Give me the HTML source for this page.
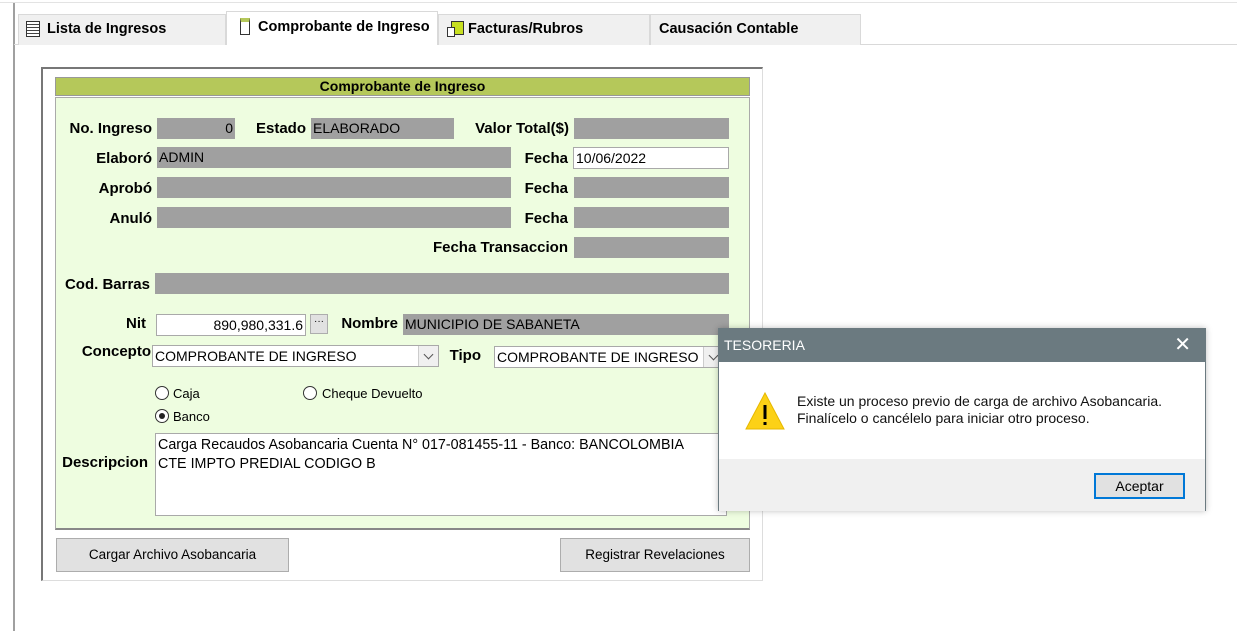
<!DOCTYPE html>
<html><head><meta charset="utf-8"><style>
*{margin:0;padding:0;box-sizing:border-box}
body{width:1237px;height:631px;background:#fff;position:relative;overflow:hidden;font-family:"Liberation Sans",sans-serif;font-size:13px;color:#000}
.a{position:absolute}
.lb{position:absolute;font-weight:bold;font-size:15px;white-space:nowrap}
.lr{position:absolute;font-weight:bold;font-size:15px;white-space:nowrap;text-align:right}
.r{text-align:right}
.g{position:absolute;background:#a0a0a0;height:21px;font-size:14px;line-height:21px;padding:0 2px;white-space:nowrap;overflow:hidden}
.w{position:absolute;background:#fff;border:1px solid #a9a9a9;height:22px;font-size:14px;line-height:20px;padding:0 2px;white-space:nowrap}
.tab{position:absolute;top:14px;height:31px;background:#f0f0f0;border:1px solid #d9d9d9;border-bottom:none;font-weight:bold;font-size:14.5px;line-height:28px;padding-left:8px}
.btn{position:absolute;background:#e1e1e1;border:1px solid #adadad;text-align:center;font-size:13.5px}
.rad{position:absolute;width:14px;height:14px;border:1px solid #333;border-radius:50%;background:#fff}
.dd{position:absolute;width:20px;height:20px;right:0;top:0;border-left:1px solid #ccc;background:#f0f0f0}
.dd:after{content:"";position:absolute;left:6px;top:5px;width:6px;height:6px;border-right:1px solid #555;border-bottom:1px solid #555;transform:rotate(45deg)}
</style></head><body>
<div class="a" style="left:0;top:0;width:1237px;height:3px;border-bottom:1px solid #e3e3e3"></div>
<div class="a" style="left:13px;top:3px;width:2px;height:628px;background:#a0a0a0"></div>
<div class="a" style="left:14px;top:44px;width:1223px;height:1px;background:#d9d9d9"></div>
<div class="tab" style="left:18px;width:208px;padding-left:28px">Lista de Ingresos</div>
<div class="a" style="left:26px;top:21px;width:14px;height:16px;border:1px solid #333;background:repeating-linear-gradient(#fff 0 2px,#444 2px 3px)"></div>
<div class="tab" style="left:226px;top:11px;width:212px;height:34px;background:#fff;padding-left:31px;line-height:30px">Comprobante de Ingreso</div>
<div class="a" style="left:240px;top:18px;width:10px;height:17px;border:1px solid #333;border-top:4px solid #b5c85a"></div>
<div class="tab" style="left:438px;width:212px;padding-left:29px">Facturas/Rubros</div>
<div class="a" style="left:451px;top:21px;width:13px;height:14px;background:#c8e020;border:1px solid #333"></div>
<div class="a" style="left:447px;top:27px;width:8px;height:10px;border:1px solid #333;background:#fff"></div>
<div class="tab" style="left:650px;width:211px">Causación Contable</div>

<div class="a" style="left:41px;top:67px;width:722px;height:514px;border:1px solid #ddd;border-top:2px solid #777;border-left:2px solid #777"></div>
<div class="a" style="left:55px;top:77px;width:695px;height:19px;background:#b5c85a;border:1px solid #999;text-align:center;font-weight:bold;font-size:14px;line-height:17px">Comprobante de Ingreso</div>
<div class="a" style="left:55px;top:97px;width:695px;height:433px;background:#eefde0;border:1px solid #aaa;border-bottom:2px solid #888"></div>

<div class="lr" style="left:20px;width:132px;top:120px">No. Ingreso</div>
<div class="g r" style="left:157px;top:118px;width:78px">0</div>
<div class="lb" style="left:256px;top:120px">Estado</div>
<div class="g" style="left:311px;top:118px;width:143px">ELABORADO</div>
<div class="lr" style="left:440px;width:129px;top:120px">Valor Total($)</div>
<div class="g" style="left:574px;top:118px;width:155px"></div>

<div class="lr" style="left:40px;width:112px;top:150px">Elaboró</div>
<div class="g" style="left:157px;top:147px;width:354px">ADMIN</div>
<div class="lr" style="left:500px;width:68px;top:150px">Fecha</div>
<div class="w" style="left:573px;top:147px;width:156px">10/06/2022</div>

<div class="lr" style="left:40px;width:112px;top:180px">Aprobó</div>
<div class="g" style="left:157px;top:177px;width:354px"></div>
<div class="lr" style="left:500px;width:68px;top:180px">Fecha</div>
<div class="g" style="left:574px;top:177px;width:155px"></div>

<div class="lr" style="left:40px;width:112px;top:210px">Anuló</div>
<div class="g" style="left:157px;top:207px;width:354px"></div>
<div class="lr" style="left:500px;width:68px;top:210px">Fecha</div>
<div class="g" style="left:574px;top:207px;width:155px"></div>

<div class="lr" style="left:400px;width:168px;top:239px">Fecha Transaccion</div>
<div class="g" style="left:574px;top:237px;width:155px"></div>

<div class="lr" style="left:40px;width:110px;top:276px">Cod. Barras</div>
<div class="g" style="left:155px;top:273px;width:574px"></div>

<div class="lr" style="left:60px;width:86px;top:315px">Nit</div>
<div class="w r" style="left:156px;top:314px;width:150px">890,980,331.6</div>
<div class="a" style="left:310px;top:314px;width:18px;height:20px;background:#e1e1e1;border:1px solid #adadad;font-size:10px;text-align:center;line-height:14px">···</div>
<div class="lr" style="left:320px;width:78px;top:315px">Nombre</div>
<div class="g" style="left:403px;top:314px;width:326px">MUNICIPIO DE SABANETA</div>

<div class="lr" style="left:60px;width:91px;top:343px">Concepto</div>
<div class="w" style="left:152px;top:345px;width:287px">COMPROBANTE DE INGRESO<div class="dd"></div></div>
<div class="lr" style="left:430px;width:51px;top:347px">Tipo</div>
<div class="w" style="left:494px;top:346px;width:230px">COMPROBANTE DE INGRESO<div class="dd"></div></div>

<div class="rad" style="left:155px;top:386px"></div><div class="a" style="left:173px;top:386px;font-size:13px">Caja</div>
<div class="rad" style="left:303px;top:386px"></div><div class="a" style="left:322px;top:386px;font-size:13px">Cheque Devuelto</div>
<div class="rad" style="left:155px;top:409px"></div><div class="a" style="left:159px;top:413px;width:6px;height:6px;border-radius:50%;background:#222"></div><div class="a" style="left:173px;top:409px;font-size:13px">Banco</div>

<div class="lr" style="left:40px;width:108px;top:454px">Descripcion</div>
<div class="a" style="left:155px;top:433px;width:572px;height:83px;background:#fff;border:1px solid #a9a9a9;font-size:14.3px;line-height:19px;padding:2px 2px;white-space:nowrap">Carga Recaudos Asobancaria Cuenta N° 017-081455-11 - Banco: BANCOLOMBIA<br>CTE IMPTO PREDIAL CODIGO B</div>

<div class="btn" style="left:56px;top:538px;width:233px;height:34px;line-height:32px">Cargar Archivo Asobancaria</div>
<div class="btn" style="left:560px;top:538px;width:190px;height:34px;line-height:32px">Registrar Revelaciones</div>

<div class="a" style="left:718px;top:328px;width:488px;height:183px;border:1px solid #6b7a80;background:#fff;box-shadow:0 0 6px rgba(0,0,0,.25)">
<div class="a" style="left:0;top:0;width:486px;height:33px;background:#6b7a80;color:#fff;font-size:14px;line-height:33px;padding-left:5px">TESORERIA<span style="position:absolute;right:14px;top:0;font-size:20px">✕</span></div>
<svg class="a" style="left:25px;top:62px" width="42" height="40"><polygon points="21,2 40,38 2,38" fill="#fcd116" stroke="#e6b800"/><rect x="19.5" y="14" width="3" height="14" fill="#000"/><rect x="19.5" y="31" width="3" height="3" fill="#000"/></svg>
<div class="a" style="left:78px;top:64px;font-size:14px;line-height:17px;color:#111;white-space:nowrap">Existe un proceso previo de carga de archivo Asobancaria.<br>Finalícelo o cancélelo para iniciar otro proceso.</div>
<div class="a" style="left:0;top:130px;width:486px;height:52px;background:#f0f0f0"></div>
<div class="a" style="left:375px;top:144px;width:91px;height:26px;background:#e1e1e1;border:2px solid #0078d7;text-align:center;line-height:22px;font-size:14px">Aceptar</div>
</div>
</body></html>
